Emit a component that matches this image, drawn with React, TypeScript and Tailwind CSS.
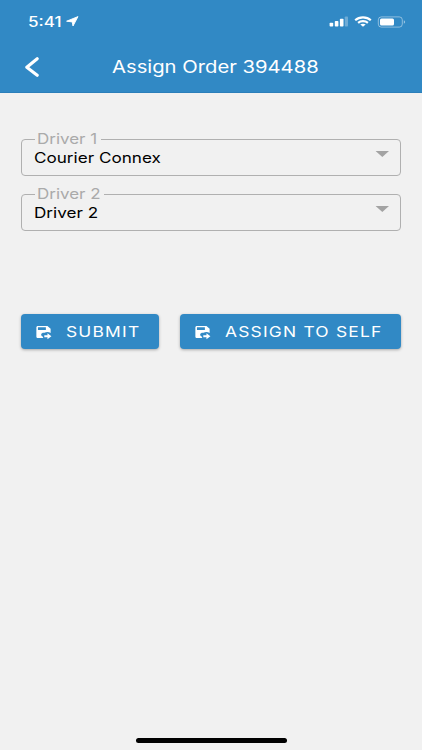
import { clsx } from "clsx";

type SelectFieldProps = {
  label: string;
  value: string;
  className?: string;
};

type ActionButtonProps = {
  label: string;
  className?: string;
};

function StatusBar() {
  return (
    <div className="flex h-[43px] items-center pl-[28px] pr-[16px] text-white">
      <span className="w-[38px] origin-left scale-x-[1.22] whitespace-nowrap text-[14px] font-medium leading-none">5:41</span>
      <svg className="h-[11px] w-[13px]" viewBox="0 0 13 11" fill="currentColor">
        <path d="M12 0.6 7 10 6.2 5.9 0.6 5.2Z" stroke="currentColor" strokeWidth="0.9" strokeLinejoin="round" />
      </svg>
      <div className="ml-auto flex items-center">
        <svg className="h-[11px] w-[20px]" viewBox="0 0 20 11" fill="currentColor">
          <rect x="1.6" y="6.8" width="3.6" height="3.7" rx="0.8" />
          <rect x="6.8" y="5" width="3.6" height="5.5" rx="0.8" />
          <rect x="11.9" y="2.8" width="3.6" height="7.7" rx="0.8" />
          <rect x="16.8" y="0.4" width="3.2" height="10.1" rx="0.8" opacity="0.3" />
        </svg>
        <svg className="ml-[6px] h-[11px] w-[18px]" viewBox="0 0 18 11" fill="none" stroke="currentColor" strokeWidth="2.2">
          <path d="M1.2 4.2C5.4 0.4 12.6 0.4 16.8 4.2" />
          <path d="M4.1 6.9C6.8 4.6 11.2 4.6 13.9 6.9" />
          <path d="M6.3 8.5C7.8 7.4 10.2 7.4 11.7 8.5L9 10.8Z" fill="currentColor" stroke="none" />
        </svg>
        <svg className="ml-[5px] h-[12px] w-[29px]" viewBox="0 0 29 12" fill="currentColor">
          <rect x="1.3" y="0.9" width="24" height="10.2" rx="3" fill="none" stroke="currentColor" strokeOpacity="0.45" />
          <rect x="3" y="2.4" width="14" height="7.2" rx="1.5" />
          <path d="M26.8 4.2C28.6 4.8 28.6 7.2 26.8 7.8Z" opacity="0.5" />
        </svg>
      </div>
    </div>
  );
}

function SelectField({ label, value, className }: SelectFieldProps) {
  return (
    <div className={clsx("relative flex h-[37px] items-center rounded-[4px] border border-[#b0b0b0] pl-[12px] pr-[11px]", className)}>
      <span className="absolute -top-[10px] left-[13px] bg-[#f1f1f1] pl-[2px] pr-[13px] text-[14.5px] leading-[17px] text-[#aaaaaa]">
        <span className="inline-block origin-left scale-x-[1.17]">{label}</span>
      </span>
      <span className="mt-px origin-left scale-x-[1.18] whitespace-nowrap text-[14.5px] leading-none text-black">{value}</span>
      <svg className="mb-[7px] ml-auto h-[6px] w-[14px]" viewBox="0 0 14 6" fill="#a3a3a3">
        <path d="M0.6 0H14L7.3 6Z" />
      </svg>
    </div>
  );
}

function ActionButton({ label, className }: ActionButtonProps) {
  return (
    <button className={clsx("flex h-[35px] items-center rounded-[4px] bg-[#3189c5] pl-[13px] text-white shadow-[0_1px_3px_rgba(0,0,0,0.3)]", className)}>
      <svg className="h-[16px] w-[19px]" viewBox="0 0 24 24" preserveAspectRatio="none" fill="currentColor">
        <path d="M17 3H5C3.89 3 3 3.9 3 5V19C3 20.1 3.89 21 5 21H11.81C11.42 20.34 11.17 19.6 11.07 18.84C9.5 18.31 8.66 16.6 9.2 15.03C9.61 13.83 10.73 13 12 13C12.44 13 12.88 13.1 13.28 13.29C15.57 11.5 18.83 11.59 21 13.54V7L17 3M15 9H5V5H15V9M13 17H17V14L22 18.5L17 23V20H13V17" />
      </svg>
      <span className="ml-[13px] mt-px origin-left scale-x-[1.2] whitespace-nowrap text-[14.5px] leading-none tracking-[1px]">{label}</span>
    </button>
  );
}

export default function App() {
  return (
    <main className="flex h-[750px] w-[422px] flex-col overflow-hidden bg-[#f1f1f1] font-['Inter',sans-serif]">
      <header className="h-[93px] shrink-0 border-b border-[#2b7fba] bg-[#3189c5]">
        <StatusBar />
        <div className="flex h-[48px] items-center pl-[24px] text-white">
          <svg className="h-[20px] w-[16px]" viewBox="0 0 16 20" fill="none" stroke="currentColor" strokeWidth="3.1" strokeLinecap="round" strokeLinejoin="round">
            <path d="M13.2 1.7 2.8 10.2 13.2 18.3" />
          </svg>
          <h1 className="ml-[72px] origin-left scale-x-[1.19] whitespace-nowrap text-[17px] leading-none">Assign Order 394488</h1>
        </div>
      </header>

      <section className="px-[21px] pt-[46px]">
        <SelectField label="Driver 1" value="Courier Connex" />
        <SelectField label="Driver 2" value="Driver 2" className="mt-[18px]" />
        <div className="mt-[83px] flex justify-between">
          <ActionButton label="SUBMIT" className="w-[138px]" />
          <ActionButton label="ASSIGN TO SELF" className="w-[221px]" />
        </div>
      </section>

      <div className="mx-auto mb-[7px] mt-auto h-[5px] w-[151px] rounded-full bg-black" />
    </main>
  );
}
